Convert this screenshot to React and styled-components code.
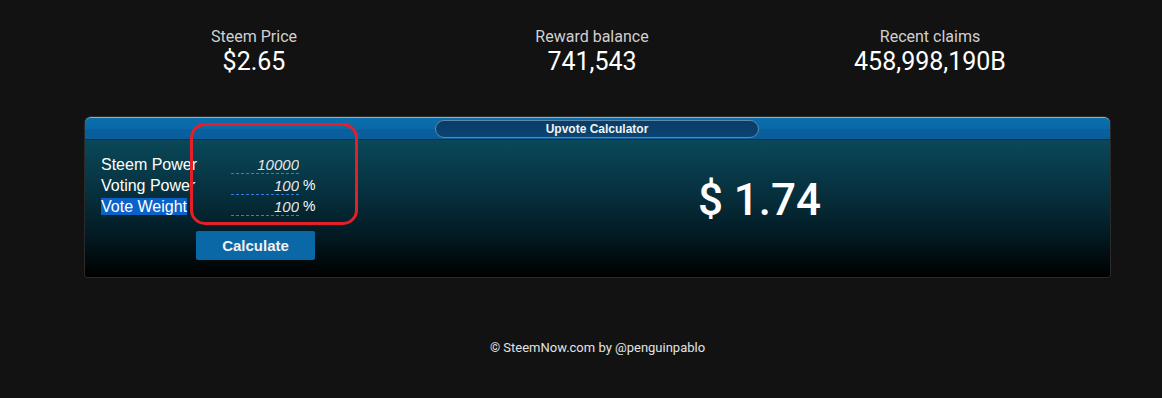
import React, { useState } from "react";
import styled, { createGlobalStyle } from "styled-components";

const stats = [
    { label: "Steem Price", value: "$2.65" },
    { label: "Reward balance", value: "741,543" },
    { label: "Recent claims", value: "458,998,190B" },
];

export default function App() {
    const [sp, setSp] = useState("10000");
    const [vp, setVp] = useState("100");
    const [vw, setVw] = useState("100");

    return (
        <>
            <GlobalStyle />
            <Page>
                <Stats>
                    {stats.map((s) => (
                        <Stat key={s.label}>
                            <StatLabel>{s.label}</StatLabel>
                            <StatValue>{s.value}</StatValue>
                        </Stat>
                    ))}
                </Stats>

                <Panel>
                    <PanelHeader>
                        <PanelTitle>Upvote Calculator</PanelTitle>
                    </PanelHeader>
                    <PanelBody>
                        <Form>
                            <Row>
                                <Label>Steem Power</Label>
                                <Field value={sp} onChange={(e) => setSp(e.target.value)} />
                            </Row>
                            <Row>
                                <Label>Voting Power</Label>
                                <Field value={vp} onChange={(e) => setVp(e.target.value)} />
                                <Unit>%</Unit>
                            </Row>
                            <Row>
                                <Label><Selected>Vote Weight</Selected></Label>
                                <Field value={vw} onChange={(e) => setVw(e.target.value)} />
                                <Unit>%</Unit>
                            </Row>
                            <CalcButton>Calculate</CalcButton>
                        </Form>
                        <Result>$ 1.74</Result>
                    </PanelBody>
                    <Highlight />
                </Panel>

                <Footer>© SteemNow.com by @penguinpablo</Footer>
            </Page>
        </>
    );
}

//====================================
//        THIS COMPONENT STYLES
//====================================
const GlobalStyle = createGlobalStyle`
    html, body {
        margin: 0;
        background: #121212;
    }
    body {
        font-family: Roboto, "Liberation Sans", sans-serif;
        color: #fff;
    }
`;
const Page = styled('div')`
    width: 1162px;
    height: 398px;
    padding-top: 27px;
    box-sizing: border-box;
`;
const Stats = styled('div')`
    display: grid;
    grid-template-columns: 338px 338px 338px;
    padding-left: 85px;
`;
const Stat = styled('div')`
    text-align: center;
`;
const StatLabel = styled('div')`
    font-size: 16px;
    line-height: 20px;
    color: #d0d0d0;
`;
const StatValue = styled('div')`
    font-size: 25px;
    line-height: 30px;
    color: #fff;
`;
const Panel = styled('div')`
    position: relative;
    margin: 40px 0 0 85px;
    width: 1025px;
    border-radius: 6px 6px 3px 3px;
    box-shadow: 0 0 0 1px #2a2a2a;
`;
const PanelHeader = styled('div')`
    height: 21px;
    border-radius: 6px 6px 0 0;
    border-top: 1px solid #86b8d6;
    border-bottom: 1px solid #1d2c36;
    background: linear-gradient(#0b6eab 0%, #0a69a7 50%, #09609e 51%, #0a5d9a 100%);
    display: flex;
    justify-content: center;
    align-items: center;
`;
const PanelTitle = styled('div')`
    width: 322px;
    height: 16px;
    margin-right: 1px;
    border: 1px solid #5f87a6;
    border-radius: 9px;
    background: linear-gradient(#0c3b66, #0a4572);
    font-family: "Liberation Sans", Arial, sans-serif;
    font-weight: bold;
    font-size: 12px;
    line-height: 16px;
    text-align: center;
    color: #f2f2f2;
`;
const PanelBody = styled('div')`
    display: grid;
    grid-template-columns: 324px 1fr;
    height: 137px;
    border-radius: 0 0 3px 3px;
    background: linear-gradient(#0a4859 0%, #062f3d 40%, #021a22 70%, #000 100%);
`;
const Form = styled('div')`
    padding: 13px 0 0 16px;
    font-family: "Liberation Sans", Arial, sans-serif;
`;
const Row = styled('div')`
    display: flex;
    align-items: flex-end;
    height: 21px;
`;
const Label = styled('div')`
    width: 130px;
    font-size: 16px;
    line-height: 18px;
    color: #fff;
    white-space: nowrap;
`;
const Selected = styled('span')`
    background: #0a62c9;
`;
const Field = styled('input')`
    width: 68px;
    padding: 0;
    border: none;
    border-bottom: 1px dashed #2d7fe0;
    background: transparent;
    color: #e6e6e6;
    font-family: "Liberation Sans", Arial, sans-serif;
    font-style: italic;
    font-size: 15px;
    line-height: 17px;
    text-align: right;
    outline: none;
`;
const Unit = styled('span')`
    margin-left: 4px;
    font-size: 14px;
    line-height: 19px;
    color: #fff;
`;
const CalcButton = styled('button')`
    display: block;
    margin: 15px 0 0 95px;
    width: 119px;
    height: 29px;
    border: none;
    border-radius: 2px;
    background: #0b68a6;
    color: #f2f2f2;
    font-family: "Liberation Sans", Arial, sans-serif;
    font-weight: bold;
    font-size: 15px;
    cursor: pointer;
`;
const Result = styled('div')`
    display: flex;
    justify-content: center;
    align-items: center;
    padding-bottom: 18px;
    font-size: 44px;
    font-weight: 500;
    color: #fff;
`;
const Highlight = styled('div')`
    position: absolute;
    left: 105px;
    top: 6px;
    width: 162px;
    height: 96px;
    border: 3px solid #e51f28;
    border-radius: 15px;
    pointer-events: none;
`;
const Footer = styled('div')`
    margin: 63px 0 0 85px;
    width: 1025px;
    text-align: center;
    font-size: 13px;
    color: #e2e2e2;
`;
